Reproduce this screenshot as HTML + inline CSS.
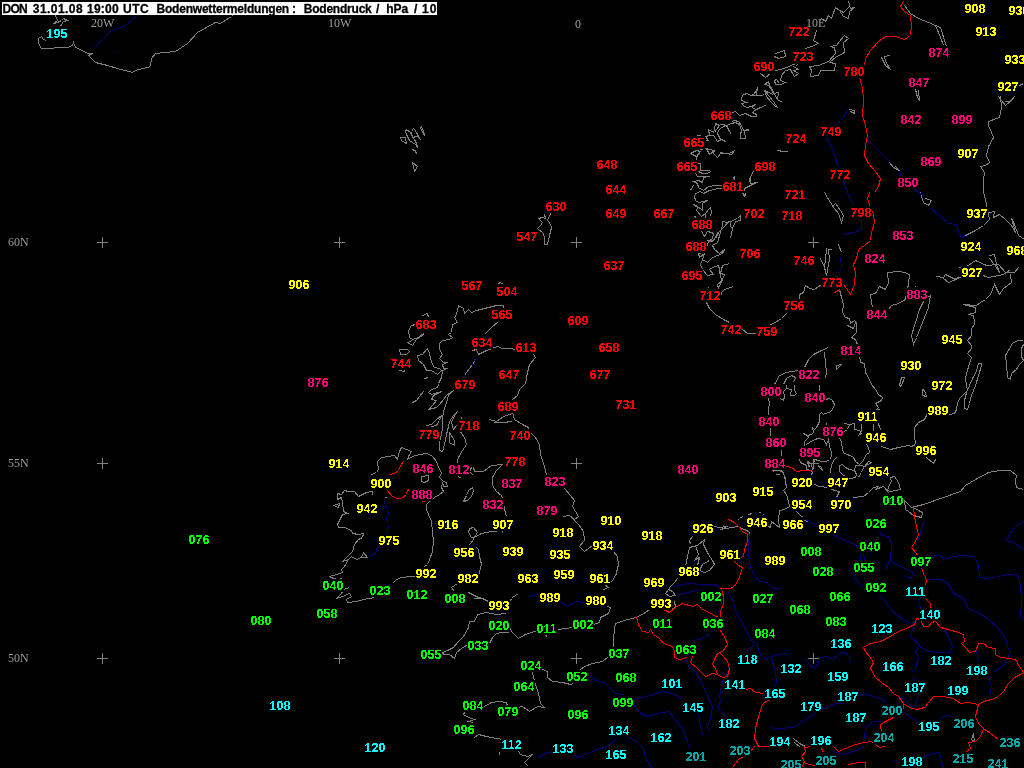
<!DOCTYPE html><html><head><meta charset="utf-8"><title>Bodenwettermeldungen</title><style>
html,body{margin:0;padding:0;background:#000;overflow:hidden}
#m{position:relative;width:1024px;height:768px;background:#000;overflow:hidden}
#m b{position:absolute;font:bold 12.5px/12px "Liberation Sans",Arial,sans-serif;letter-spacing:.05px;white-space:pre}
#n{position:absolute;left:0;top:0;width:1024px;height:768px;filter:url(#thr)}
#m i{position:absolute;font:normal 12px/12px "Liberation Serif","Times New Roman",serif;color:#9c9c9c;white-space:pre}
#l{position:absolute;left:0;top:0;width:1024px;height:768px;opacity:0.999}
#t{position:absolute;left:2px;top:2px;width:435px;height:13px;color:#000;font:bold 12px/13px "Liberation Sans",Arial,sans-serif;white-space:pre;overflow:hidden;opacity:0.999;-webkit-text-stroke:0.3px #000}
.r{color:#ff0000}.p{color:#ff0078}.y{color:#ffff00}.g{color:#00ff00}.c{color:#00ffff}.t{color:#00a8a8}
</style></head><body><div id="m">
<svg width="1024" height="768" viewBox="0 0 1024 768" style="position:absolute;left:0;top:0" fill="none" stroke-width="1" shape-rendering="crispEdges">
<path stroke="#808080" d="M55.5 15.5 L57.5 20.5 L53.5 23.5 L57.5 22.5 L61.5 20.5 L63.5 18.5 L67.5 20.5 L63.5 21.5 L61.5 24.5 L60.5 26.5 M41.5 36.5 L38.5 38.5 L38.5 43.5 L41.5 48.5 L46.5 48.5 L61.5 47.5 L67.5 47.5 L72.5 45.5 L73.5 42.5 L75.5 47.5 L86.5 52.5 L87.5 53.5 L92.5 53.5 L88.5 55.5 L95.5 62.5 L107.5 65.5 L117.5 68.5 L132.5 72.5 L135.5 70.5 L150.5 66.5 L151.5 58.5 L155.5 53.5 L175.5 51.5 L187.5 43.5 L197.5 32.5 L215.5 22.5 L220.5 23.5 L231.5 16.5 L232.5 15.5 M41.5 36.5 L43.5 39.5 L46.5 40.5 M400.5 137.5 L405.5 137.5 L406.5 143.5 L404.5 142.5 L401.5 140.5 L400.5 137.5 M406.5 129.5 L405.5 131.5 L406.5 134.5 L408.5 138.5 L409.5 140.5 L412.5 142.5 L415.5 144.5 L417.5 147.5 L416.5 143.5 L414.5 139.5 L412.5 137.5 L410.5 132.5 L406.5 129.5 M411.5 131.5 L413.5 128.5 L414.5 129.5 L416.5 132.5 L418.5 136.5 L420.5 139.5 L417.5 136.5 L415.5 136.5 L413.5 137.5 L411.5 134.5 L411.5 131.5 M420.5 127.5 L421.5 126.5 L423.5 131.5 L424.5 135.5 L422.5 132.5 L420.5 127.5 M412.5 149.5 L414.5 150.5 L416.5 153.5 L415.5 150.5 L412.5 149.5 M412.5 162.5 L417.5 166.5 L414.5 171.5 L412.5 162.5 M904.5 5.5 L910.5 13.5 L918.5 18.5 L928.5 22.5 L935.5 25.5 L940.5 37.5 L943.5 45.5 M935.5 25.5 L940.5 27.5 L946.5 46.5 M949.5 52.5 L950.5 53.5 M881.5 57.5 L885.5 65.5 L890.5 69.5 L885.5 61.5 L884.5 56.5 L890.5 55.5 M915.5 89.5 L917.5 97.5 L919.5 100.5 L918.5 90.5 M848.5 1.5 L850.5 8.5 L854.5 7.5 L849.5 11.5 L848.5 18.5 L843.5 16.5 L839.5 10.5 L843.5 12.5 L848.5 7.5 M839.5 10.5 L835.5 7.5 L831.5 18.5 L828.5 15.5 L825.5 21.5 L821.5 18.5 M816.5 30.5 L813.5 40.5 L818.5 43.5 L811.5 46.5 L805.5 48.5 M844.5 35.5 L848.5 38.5 L843.5 42.5 L844.5 52.5 L835.5 57.5 L829.5 62.5 L835.5 63.5 L834.5 70.5 L820.5 70.5 L818.5 75.5 L810.5 76.5 L811.5 70.5 L809.5 66.5 L818.5 65.5 L828.5 61.5 L835.5 53.5 L834.5 47.5 L830.5 46.5 L836.5 45.5 L839.5 41.5 L844.5 35.5 M775.5 53.5 L784.5 50.5 L785.5 56.5 L778.5 58.5 L774.5 56.5 M848.5 109.5 L854.5 110.5 L854.5 113.5 L850.5 111.5 M889.5 162.5 L893.5 167.5 L899.5 170.5 L895.5 166.5 M998.5 96.5 L1001.5 100.5 L1005.5 105.5 L1011.5 100.5 L1014.5 96.5 L1009.5 101.5 L1004.5 101.5 M1000.5 96.5 L1001.5 107.5 L999.5 117.5 L988.5 121.5 L988.5 125.5 L991.5 132.5 L993.5 137.5 L988.5 146.5 L986.5 155.5 L989.5 162.5 L985.5 165.5 L980.5 166.5 L984.5 172.5 L983.5 180.5 L983.5 192.5 M1019.5 85.5 L1023.5 83.5 M428.5 317.5 L427.5 313.5 L422.5 315.5 M415.5 324.5 L411.5 325.5 L408.5 330.5 L409.5 337.5 L412.5 339.5 L418.5 337.5 L423.5 333.5 L422.5 335.5 L416.5 339.5 L412.5 345.5 L407.5 342.5 L412.5 340.5 M399.5 349.5 L407.5 349.5 L409.5 351.5 L406.5 354.5 L400.5 354.5 L399.5 349.5 M417.5 355.5 L422.5 354.5 L427.5 348.5 L429.5 353.5 L431.5 362.5 L434.5 367.5 L439.5 368.5 L441.5 370.5 L437.5 374.5 L431.5 370.5 L426.5 370.5 L423.5 364.5 L418.5 360.5 L417.5 355.5 M399.5 370.5 L404.5 371.5 L404.5 369.5 M424.5 378.5 L428.5 377.5 M458.5 305.5 L456.5 314.5 L454.5 317.5 L457.5 322.5 L452.5 324.5 L451.5 332.5 L448.5 334.5 L452.5 337.5 L449.5 339.5 L442.5 340.5 L439.5 343.5 L439.5 349.5 L442.5 354.5 L439.5 358.5 L443.5 362.5 L447.5 362.5 L442.5 364.5 L443.5 368.5 L447.5 368.5 L442.5 370.5 L441.5 377.5 L438.5 383.5 M458.5 305.5 L463.5 308.5 L464.5 313.5 L468.5 309.5 L471.5 312.5 L476.5 310.5 L488.5 307.5 L496.5 305.5 L503.5 305.5 L503.5 307.5 M498.5 283.5 L500.5 282.5 L503.5 284.5 M498.5 321.5 L491.5 327.5 L484.5 334.5 M472.5 350.5 L476.5 349.5 L478.5 354.5 L486.5 350.5 L497.5 346.5 L502.5 348.5 L512.5 348.5 M544.5 214.5 L545.5 218.5 L542.5 217.5 L538.5 218.5 L542.5 222.5 L540.5 225.5 L537.5 228.5 L543.5 233.5 L544.5 238.5 L544.5 244.5 L547.5 244.5 L549.5 235.5 L551.5 227.5 L549.5 222.5 L547.5 220.5 L550.5 213.5 M708.5 240.5 L707.5 245.5 L702.5 252.5 L698.5 253.5 L699.5 257.5 L704.5 253.5 L702.5 259.5 L707.5 262.5 L712.5 257.5 L722.5 253.5 L724.5 249.5 L719.5 253.5 L714.5 249.5 L712.5 245.5 L717.5 242.5 L720.5 232.5 M702.5 259.5 L700.5 264.5 L702.5 269.5 L707.5 275.5 L713.5 274.5 L709.5 269.5 L712.5 267.5 L718.5 265.5 L719.5 269.5 L720.5 277.5 L722.5 280.5 L717.5 284.5 L718.5 288.5 L724.5 274.5 L720.5 273.5 L722.5 265.5 L729.5 263.5 M733.5 286.5 L724.5 289.5 L721.5 292.5 L720.5 297.5 M706.5 302.5 L709.5 308.5 L715.5 314.5 L723.5 319.5 L729.5 322.5 M742.5 329.5 L747.5 333.5 L755.5 333.5 M708.5 287.5 L709.5 288.5 M512.5 348.5 L515.5 350.5 M533.5 354.5 L535.5 357.5 L529.5 364.5 L527.5 372.5 L525.5 384.5 M743.5 192.5 L744.5 195.5 L745.5 193.5 M824.5 192.5 L830.5 202.5 L834.5 208.5 L838.5 213.5 L841.5 222.5 L843.5 215.5 L840.5 210.5 L835.5 203.5 L831.5 207.5 M838.5 244.5 L841.5 252.5 M826.5 248.5 L825.5 259.5 L824.5 267.5 L820.5 258.5 L824.5 267.5 L826.5 275.5 L829.5 259.5 L828.5 249.5 L831.5 249.5 M821.5 284.5 L814.5 289.5 L809.5 288.5 L805.5 285.5 L803.5 292.5 L799.5 294.5 L799.5 298.5 M786.5 313.5 L781.5 318.5 L773.5 323.5 L768.5 325.5 M839.5 289.5 L841.5 297.5 L843.5 304.5 L842.5 312.5 L845.5 317.5 L849.5 318.5 L850.5 323.5 L854.5 320.5 L856.5 322.5 L856.5 332.5 L851.5 337.5 L855.5 339.5 L858.5 347.5 M859.5 354.5 L860.5 362.5 L864.5 363.5 L865.5 372.5 L869.5 379.5 L871.5 384.5 M847.5 325.5 L853.5 328.5 L855.5 322.5 M887.5 272.5 L898.5 271.5 L904.5 272.5 L909.5 274.5 L908.5 284.5 L906.5 292.5 L905.5 299.5 L898.5 303.5 L891.5 305.5 L888.5 309.5 M887.5 272.5 L888.5 282.5 L885.5 289.5 L879.5 286.5 L875.5 293.5 L870.5 294.5 L871.5 302.5 L872.5 307.5 M930.5 295.5 L928.5 307.5 L924.5 317.5 L920.5 327.5 L916.5 337.5 L913.5 344.5 L911.5 335.5 L915.5 322.5 L919.5 309.5 L924.5 299.5 L930.5 295.5 M915.5 286.5 L916.5 287.5 M828.5 347.5 L821.5 350.5 L813.5 354.5 L808.5 359.5 L804.5 367.5 M824.5 352.5 L825.5 362.5 L826.5 372.5 L825.5 378.5 M836.5 365.5 L841.5 364.5 L836.5 369.5 L836.5 365.5 M774.5 384.5 L779.5 375.5 L786.5 372.5 L798.5 370.5 M783.5 384.5 L786.5 378.5 L791.5 375.5 L795.5 377.5 L793.5 382.5 M983.5 192.5 L985.5 199.5 L987.5 209.5 L989.5 219.5 L983.5 225.5 L975.5 230.5 L965.5 235.5 M989.5 212.5 L994.5 211.5 L993.5 217.5 L999.5 214.5 L1005.5 219.5 L1011.5 225.5 L1015.5 232.5 L1011.5 218.5 L1014.5 224.5 L1018.5 235.5 L1024.5 239.5 M989.5 255.5 L994.5 254.5 L996.5 264.5 L999.5 272.5 L994.5 264.5 L989.5 258.5 M936.5 276.5 L943.5 277.5 L945.5 274.5 L953.5 278.5 L960.5 277.5 L948.5 282.5 L943.5 278.5 M958.5 267.5 L965.5 267.5 L975.5 260.5 L986.5 265.5 L998.5 264.5 L1005.5 272.5 L1014.5 272.5 L1018.5 267.5 M980.5 274.5 L988.5 277.5 L1003.5 274.5 L1010.5 269.5 M1010.5 274.5 L1011.5 282.5 L1003.5 288.5 L999.5 294.5 L994.5 284.5 L990.5 294.5 L985.5 299.5 L980.5 302.5 L976.5 305.5 L963.5 304.5 L975.5 307.5 L975.5 312.5 L968.5 314.5 L973.5 315.5 L974.5 322.5 M920.5 192.5 L923.5 202.5 L928.5 205.5 L931.5 200.5 L925.5 198.5 M974.5 320.5 L974.5 324.5 L971.5 328.5 L971.5 335.5 L967.5 340.5 L971.5 345.5 L971.5 348.5 L967.5 353.5 L971.5 357.5 L969.5 363.5 L966.5 373.5 L965.5 378.5 L966.5 385.5 L967.5 390.5 L964.5 393.5 L959.5 398.5 L957.5 403.5 L956.5 409.5 L954.5 413.5 L949.5 414.5 M978.5 363.5 L981.5 363.5 L981.5 365.5 L978.5 375.5 L975.5 385.5 L971.5 395.5 L969.5 403.5 L967.5 409.5 L964.5 408.5 L964.5 400.5 L966.5 392.5 L969.5 385.5 L972.5 378.5 L976.5 371.5 L978.5 363.5 M1022.5 340.5 L1017.5 340.5 L1012.5 343.5 L1008.5 350.5 L1005.5 355.5 L1006.5 363.5 L1007.5 377.5 L1010.5 379.5 L1011.5 373.5 L1016.5 369.5 L1019.5 364.5 L1023.5 360.5 L1021.5 356.5 L1021.5 349.5 L1022.5 345.5 L1024.5 344.5 M901.5 377.5 L904.5 377.5 L901.5 385.5 L899.5 385.5 L901.5 377.5 M922.5 389.5 L924.5 390.5 L926.5 396.5 L922.5 395.5 L922.5 389.5 M926.5 416.5 L926.5 413.5 M775.5 70.5 L780.5 69.5 L786.5 67.5 L793.5 64.5 L794.5 64.5 M793.5 66.5 L798.5 69.5 L793.5 70.5 L798.5 73.5 L794.5 76.5 L792.5 73.5 L790.5 69.5 L785.5 70.5 L781.5 75.5 L780.5 80.5 L785.5 82.5 L780.5 84.5 L775.5 84.5 L774.5 80.5 L776.5 79.5 L779.5 83.5 M797.5 64.5 L795.5 66.5 M760.5 73.5 L765.5 77.5 L770.5 73.5 M764.5 84.5 L768.5 81.5 L769.5 85.5 L764.5 84.5 M769.5 86.5 L773.5 93.5 L778.5 92.5 L777.5 99.5 L774.5 94.5 L770.5 86.5 M777.5 99.5 L782.5 102.5 M764.5 90.5 L768.5 92.5 L773.5 94.5 M764.5 90.5 L766.5 96.5 L770.5 101.5 L774.5 105.5 L777.5 107.5 L773.5 101.5 L768.5 95.5 L764.5 90.5 M757.5 87.5 L756.5 90.5 L753.5 94.5 L750.5 95.5 L756.5 95.5 L757.5 87.5 M750.5 95.5 L747.5 93.5 L743.5 94.5 L741.5 97.5 L741.5 100.5 L746.5 102.5 L741.5 103.5 L743.5 105.5 L746.5 107.5 L751.5 106.5 L755.5 104.5 L752.5 107.5 L755.5 109.5 L760.5 107.5 L765.5 105.5 L758.5 108.5 L754.5 110.5 L752.5 112.5 L756.5 114.5 L756.5 116.5 L751.5 116.5 L745.5 113.5 L739.5 115.5 L735.5 111.5 L732.5 112.5 M756.5 95.5 L761.5 95.5 L764.5 94.5 M731.5 121.5 L734.5 120.5 L738.5 121.5 L741.5 125.5 L743.5 130.5 L748.5 129.5 L748.5 130.5 L744.5 130.5 L745.5 138.5 L740.5 138.5 L740.5 134.5 L741.5 130.5 L739.5 124.5 L735.5 122.5 L731.5 123.5 L726.5 125.5 L729.5 131.5 L731.5 134.5 M726.5 125.5 L720.5 124.5 L724.5 124.5 M715.5 123.5 L714.5 129.5 L713.5 132.5 L708.5 129.5 L709.5 135.5 L705.5 136.5 L708.5 140.5 L705.5 140.5 M709.5 135.5 L713.5 135.5 L717.5 141.5 L721.5 139.5 L725.5 141.5 L720.5 139.5 L717.5 133.5 L718.5 130.5 L721.5 127.5 L726.5 125.5 M715.5 123.5 L719.5 125.5 L716.5 129.5 L714.5 132.5 M696.5 135.5 L700.5 135.5 M690.5 153.5 L696.5 150.5 L700.5 151.5 L696.5 156.5 L690.5 153.5 M700.5 149.5 L706.5 148.5 L709.5 154.5 L714.5 150.5 L708.5 149.5 L706.5 148.5 M714.5 150.5 L713.5 153.5 L717.5 157.5 L720.5 153.5 L729.5 153.5 L734.5 150.5 L731.5 154.5 L720.5 152.5 M700.5 151.5 L696.5 157.5 L696.5 160.5 M777.5 150.5 L783.5 151.5 L787.5 151.5 M697.5 163.5 L700.5 163.5 L700.5 170.5 L709.5 170.5 L710.5 171.5 L707.5 173.5 L702.5 173.5 L698.5 171.5 L695.5 173.5 L697.5 176.5 L702.5 176.5 L709.5 176.5 L703.5 177.5 L702.5 182.5 L698.5 180.5 L693.5 181.5 L697.5 183.5 L698.5 187.5 L703.5 190.5 L708.5 186.5 L715.5 185.5 L722.5 185.5 M693.5 185.5 L690.5 190.5 M722.5 188.5 L718.5 188.5 L709.5 190.5 L703.5 193.5 L700.5 191.5 L695.5 193.5 L694.5 196.5 L695.5 200.5 L698.5 202.5 L703.5 201.5 L707.5 200.5 L702.5 203.5 L702.5 210.5 L696.5 205.5 L693.5 204.5 L697.5 207.5 L696.5 210.5 L701.5 216.5 L705.5 213.5 L708.5 209.5 L710.5 207.5 L711.5 211.5 L710.5 216.5 M705.5 213.5 L705.5 217.5 M694.5 216.5 L696.5 217.5 M734.5 176.5 L732.5 179.5 M734.5 176.5 L734.5 179.5 M753.5 171.5 L750.5 176.5 L750.5 183.5 L757.5 182.5 L752.5 184.5 L748.5 186.5 L744.5 188.5 L743.5 193.5 L742.5 193.5 L744.5 196.5 L745.5 195.5 M750.5 176.5 L749.5 180.5 L750.5 183.5 M740.5 215.5 L737.5 218.5 L730.5 221.5 L727.5 222.5 L722.5 221.5 L722.5 225.5 L720.5 231.5 L717.5 232.5 L715.5 237.5 L712.5 241.5 L708.5 240.5 L707.5 240.5 L710.5 241.5 L715.5 238.5 L719.5 231.5 L724.5 226.5 L728.5 221.5 M740.5 215.5 L740.5 220.5 L735.5 221.5 L732.5 228.5 L730.5 238.5 M730.5 221.5 L730.5 226.5 L732.5 228.5 M701.5 231.5 L704.5 236.5 L707.5 231.5 L711.5 232.5 L713.5 233.5 L712.5 238.5 L709.5 240.5 M372.5 494.5 L372.5 491.5 L366.5 492.5 L362.5 494.5 L358.5 496.5 L354.5 491.5 L348.5 491.5 L344.5 490.5 L341.5 494.5 L337.5 493.5 L337.5 499.5 L341.5 497.5 L342.5 502.5 L343.5 511.5 L347.5 513.5 L342.5 514.5 L339.5 520.5 L337.5 524.5 L338.5 527.5 L344.5 527.5 L351.5 530.5 L352.5 533.5 L358.5 534.5 L363.5 533.5 L362.5 537.5 L358.5 539.5 L354.5 544.5 L352.5 551.5 L348.5 555.5 L342.5 561.5 L348.5 559.5 L351.5 556.5 L356.5 559.5 L361.5 557.5 L367.5 557.5 L363.5 552.5 L361.5 557.5 M348.5 559.5 L344.5 566.5 L341.5 569.5 L342.5 572.5 L336.5 574.5 L329.5 576.5 M333.5 505.5 L339.5 503.5 L338.5 507.5 L333.5 505.5 M371.5 474.5 L376.5 472.5 L378.5 469.5 L377.5 461.5 L381.5 457.5 L388.5 456.5 L394.5 455.5 L397.5 459.5 L399.5 451.5 L401.5 447.5 L411.5 451.5 L408.5 456.5 L407.5 459.5 L412.5 456.5 L419.5 454.5 L427.5 453.5 L432.5 456.5 L436.5 461.5 L438.5 467.5 L441.5 472.5 L439.5 477.5 L443.5 481.5 L446.5 482.5 L447.5 486.5 L443.5 486.5 L442.5 482.5 L441.5 487.5 L443.5 491.5 L439.5 494.5 L434.5 497.5 L429.5 501.5 L426.5 504.5 L426.5 509.5 L428.5 514.5 L431.5 521.5 L432.5 531.5 L433.5 541.5 L432.5 551.5 L429.5 559.5 L427.5 564.5 L424.5 566.5 M421.5 476.5 L428.5 475.5 L428.5 480.5 L424.5 482.5 L421.5 481.5 L421.5 476.5 M423.5 391.5 L419.5 396.5 L416.5 400.5 L412.5 402.5 M438.5 384.5 L437.5 387.5 L431.5 389.5 L428.5 392.5 L431.5 394.5 L441.5 391.5 L433.5 395.5 L431.5 399.5 L436.5 400.5 L432.5 405.5 L428.5 409.5 L436.5 407.5 L439.5 404.5 L443.5 399.5 L446.5 395.5 L453.5 390.5 L448.5 395.5 L446.5 402.5 L443.5 411.5 L442.5 419.5 L442.5 427.5 L441.5 434.5 L439.5 441.5 L439.5 450.5 L442.5 451.5 L444.5 444.5 L446.5 434.5 L448.5 426.5 L449.5 421.5 L453.5 415.5 L457.5 411.5 L453.5 417.5 L451.5 422.5 L453.5 429.5 L456.5 425.5 M426.5 425.5 L431.5 424.5 L436.5 419.5 L441.5 415.5 L439.5 420.5 L436.5 425.5 L431.5 426.5 M449.5 432.5 L454.5 440.5 L454.5 445.5 L449.5 442.5 L449.5 432.5 M461.5 416.5 L461.5 419.5 M459.5 430.5 L464.5 437.5 L466.5 444.5 L462.5 450.5 L458.5 457.5 L456.5 464.5 M458.5 476.5 L461.5 478.5 M473.5 467.5 L474.5 471.5 L483.5 471.5 L491.5 465.5 L502.5 464.5 M471.5 467.5 L469.5 471.5 L473.5 475.5 M489.5 419.5 L496.5 421.5 L503.5 416.5 L512.5 413.5 M493.5 422.5 L502.5 422.5 L512.5 421.5 M502.5 464.5 L496.5 470.5 L492.5 477.5 L492.5 485.5 L496.5 491.5 L501.5 495.5 L503.5 501.5 L504.5 509.5 L506.5 516.5 M472.5 487.5 L473.5 490.5 L471.5 496.5 L467.5 500.5 L463.5 501.5 L466.5 495.5 L468.5 490.5 L472.5 487.5 M469.5 528.5 L473.5 527.5 L477.5 532.5 L474.5 537.5 L471.5 537.5 L468.5 532.5 L469.5 528.5 M474.5 537.5 L481.5 533.5 L491.5 531.5 L502.5 530.5 L502.5 532.5 M474.5 537.5 L471.5 542.5 L468.5 545.5 M476.5 547.5 L478.5 549.5 L479.5 556.5 L481.5 564.5 L479.5 571.5 L478.5 576.5 M384.5 497.5 L386.5 497.5 M524.5 384.5 L519.5 389.5 L517.5 395.5 L512.5 399.5 M512.5 412.5 L514.5 419.5 L522.5 424.5 L528.5 427.5 L529.5 431.5 L535.5 437.5 L539.5 444.5 L540.5 454.5 L544.5 466.5 L546.5 475.5 M564.5 488.5 L570.5 495.5 L574.5 500.5 L572.5 506.5 L575.5 511.5 L578.5 516.5 L574.5 519.5 L569.5 515.5 L563.5 516.5 L569.5 515.5 L573.5 519.5 L578.5 524.5 L583.5 531.5 L584.5 540.5 L579.5 546.5 L584.5 551.5 L592.5 545.5 M613.5 551.5 L617.5 556.5 L618.5 564.5 L615.5 576.5 M714.5 526.5 L719.5 527.5 L727.5 526.5 L720.5 529.5 L732.5 527.5 L737.5 526.5 L744.5 529.5 L748.5 531.5 L750.5 534.5 M737.5 520.5 L738.5 519.5 M740.5 517.5 L743.5 516.5 M748.5 514.5 L752.5 513.5 M758.5 512.5 L760.5 512.5 M763.5 514.5 L764.5 515.5 M704.5 539.5 L697.5 545.5 L689.5 547.5 L687.5 556.5 L685.5 566.5 M692.5 536.5 L689.5 540.5 L690.5 544.5 M704.5 539.5 L703.5 544.5 L708.5 554.5 L712.5 560.5 L714.5 564.5 L709.5 570.5 L704.5 572.5 L699.5 570.5 L702.5 564.5 L709.5 560.5 M695.5 545.5 L698.5 554.5 L695.5 559.5 L699.5 557.5 L697.5 565.5 M773.5 470.5 L779.5 470.5 L783.5 472.5 L785.5 481.5 L786.5 487.5 L783.5 490.5 L786.5 494.5 L788.5 501.5 L789.5 506.5 L784.5 509.5 L779.5 510.5 L778.5 519.5 L779.5 527.5 L775.5 524.5 L771.5 521.5 L770.5 527.5 L768.5 526.5 M814.5 484.5 L819.5 486.5 L828.5 487.5 L834.5 490.5 L839.5 491.5 L836.5 497.5 M853.5 497.5 L863.5 496.5 L868.5 492.5 L873.5 487.5 L878.5 486.5 L875.5 489.5 L883.5 486.5 L886.5 489.5 L888.5 492.5 L885.5 489.5 M890.5 477.5 L894.5 476.5 L898.5 482.5 L900.5 489.5 L895.5 490.5 L890.5 491.5 L887.5 490.5 L889.5 484.5 L891.5 481.5 L890.5 477.5 M881.5 446.5 L890.5 449.5 L898.5 447.5 L908.5 445.5 L911.5 446.5 L915.5 444.5 L914.5 434.5 L914.5 427.5 L918.5 422.5 L924.5 419.5 L926.5 415.5 M900.5 384.5 L900.5 386.5 M926.5 457.5 L933.5 463.5 L935.5 459.5 M904.5 500.5 L911.5 507.5 L923.5 504.5 L943.5 497.5 L960.5 491.5 L965.5 485.5 L975.5 479.5 L988.5 472.5 L1000.5 470.5 L1010.5 470.5 L1016.5 475.5 L1015.5 481.5 L1016.5 487.5 L1023.5 489.5 M904.5 500.5 L905.5 509.5 L908.5 511.5 L913.5 515.5 L921.5 517.5 L922.5 512.5 L918.5 510.5 L913.5 507.5 M796.5 511.5 L800.5 515.5 L803.5 517.5 M800.5 519.5 L808.5 521.5 M329.5 576.5 L333.5 578.5 L338.5 579.5 L342.5 578.5 M349.5 587.5 L343.5 589.5 L341.5 593.5 L336.5 598.5 L342.5 596.5 L349.5 593.5 L351.5 596.5 L346.5 599.5 L347.5 602.5 L356.5 601.5 L363.5 599.5 L374.5 597.5 M392.5 583.5 L396.5 579.5 L401.5 577.5 L411.5 576.5 L416.5 576.5 M457.5 583.5 L451.5 587.5 L454.5 591.5 M468.5 592.5 L476.5 596.5 L479.5 597.5 L474.5 598.5 L482.5 598.5 L488.5 601.5 M507.5 602.5 L512.5 598.5 M506.5 613.5 L496.5 614.5 L486.5 612.5 L477.5 614.5 L474.5 621.5 L469.5 621.5 L468.5 627.5 L463.5 636.5 L458.5 641.5 L453.5 647.5 L447.5 650.5 L442.5 652.5 L443.5 654.5 L449.5 654.5 L454.5 658.5 L456.5 652.5 L461.5 648.5 L464.5 646.5 L468.5 644.5 M489.5 643.5 L492.5 637.5 L496.5 633.5 L502.5 632.5 L508.5 632.5 M509.5 627.5 L512.5 632.5 M484.5 706.5 L491.5 702.5 L498.5 701.5 L506.5 702.5 L507.5 706.5 M464.5 712.5 L463.5 714.5 L468.5 717.5 L474.5 719.5 L468.5 721.5 L473.5 722.5 M474.5 737.5 L478.5 734.5 L486.5 736.5 L496.5 738.5 L502.5 739.5 M499.5 751.5 L499.5 754.5 M512.5 597.5 L518.5 593.5 M512.5 632.5 L518.5 638.5 L525.5 634.5 L537.5 630.5 M558.5 629.5 L572.5 627.5 M593.5 624.5 L599.5 622.5 L600.5 617.5 L608.5 613.5 L610.5 607.5 L607.5 606.5 M603.5 589.5 L608.5 587.5 L604.5 584.5 L612.5 581.5 L614.5 576.5 M545.5 635.5 L547.5 636.5 M677.5 578.5 L674.5 582.5 L670.5 586.5 L668.5 589.5 L665.5 593.5 L669.5 596.5 L675.5 595.5 L672.5 591.5 L668.5 589.5 M674.5 601.5 L675.5 607.5 L672.5 608.5 M649.5 609.5 L642.5 614.5 L635.5 617.5 L624.5 620.5 L615.5 623.5 L614.5 629.5 L613.5 638.5 L613.5 647.5 M608.5 656.5 L602.5 661.5 L592.5 663.5 L584.5 666.5 L580.5 669.5 M542.5 669.5 L547.5 671.5 L547.5 677.5 L552.5 681.5 L562.5 682.5 L570.5 684.5 L573.5 683.5 M532.5 672.5 L534.5 681.5 L538.5 693.5 L540.5 703.5 L544.5 707.5 L537.5 706.5 L529.5 711.5 L522.5 706.5 L517.5 707.5 M517.5 676.5 L517.5 676.5 M518.5 751.5 L520.5 754.5 L527.5 756.5 L532.5 754.5 L528.5 758.5 L524.5 762.5 L528.5 766.5 M793.5 738.5 L799.5 743.5 L805.5 746.5 M794.5 742.5 L800.5 747.5 M973.5 733.5 L971.5 739.5 L974.5 741.5 L973.5 733.5 M819.5 384.5 L819.5 390.5 M786.5 384.5 L786.5 388.5 L783.5 391.5 L784.5 396.5 L783.5 400.5 L780.5 398.5 M786.5 388.5 L791.5 389.5 L790.5 395.5 L794.5 395.5 L796.5 393.5 L794.5 390.5 L794.5 384.5 M825.5 399.5 L829.5 398.5 L832.5 400.5 L834.5 404.5 L832.5 409.5 L829.5 412.5 L824.5 413.5 L823.5 414.5 L821.5 412.5 L819.5 414.5 L819.5 421.5 L816.5 427.5 L814.5 429.5 L812.5 427.5 L813.5 432.5 L811.5 434.5 L807.5 435.5 L803.5 433.5 L807.5 435.5 L808.5 437.5 L804.5 441.5 L804.5 445.5 M806.5 444.5 L809.5 442.5 L814.5 439.5 L818.5 438.5 L823.5 439.5 L826.5 444.5 L828.5 439.5 L829.5 446.5 L831.5 452.5 L831.5 456.5 L829.5 459.5 L826.5 461.5 L821.5 461.5 L818.5 460.5 L814.5 459.5 L813.5 464.5 L812.5 469.5 L811.5 464.5 L809.5 462.5 L807.5 461.5 L808.5 466.5 L810.5 465.5 M799.5 459.5 L800.5 462.5 L804.5 464.5 L806.5 465.5 L806.5 469.5 L810.5 470.5 L812.5 471.5 L811.5 475.5 M818.5 465.5 L821.5 467.5 L822.5 470.5 L819.5 467.5 L818.5 465.5 M836.5 457.5 L833.5 460.5 L831.5 465.5 L830.5 470.5 L830.5 472.5 M844.5 423.5 L849.5 424.5 L854.5 423.5 L854.5 429.5 L859.5 430.5 L861.5 433.5 L858.5 435.5 L861.5 431.5 L861.5 423.5 M849.5 424.5 L847.5 429.5 L844.5 431.5 M826.5 422.5 L826.5 424.5 M839.5 437.5 L841.5 442.5 L842.5 449.5 L843.5 452.5 L846.5 454.5 L850.5 455.5 L853.5 457.5 L855.5 461.5 L859.5 464.5 L863.5 460.5 L864.5 457.5 L866.5 454.5 L869.5 452.5 L868.5 447.5 L866.5 444.5 M873.5 423.5 L873.5 430.5 M878.5 423.5 L879.5 427.5 L881.5 430.5 M871.5 384.5 L875.5 389.5 L878.5 394.5 L882.5 397.5 L881.5 400.5 L875.5 403.5 L878.5 407.5 L876.5 409.5 L879.5 409.5 M839.5 465.5 L842.5 464.5 L845.5 467.5 L849.5 469.5 L854.5 470.5 L856.5 474.5 L855.5 477.5 L850.5 478.5 L843.5 475.5 L839.5 471.5 L839.5 467.5 L839.5 465.5 M855.5 465.5 L861.5 465.5 L864.5 466.5 L868.5 461.5 L871.5 462.5 L866.5 465.5 L863.5 467.5 L861.5 472.5 L858.5 477.5 M854.5 470.5 L855.5 465.5 M768.5 398.5 L769.5 403.5 L768.5 409.5 L768.5 414.5 M770.5 427.5 L770.5 435.5 M781.5 449.5 L781.5 455.5 M771.5 469.5 L773.5 471.5 L774.5 469.5 M775.5 474.5 L779.5 474.5 M781.5 469.5 L783.5 474.5 L786.5 479.5"/>
<path stroke="#000080" d="M137.5 15.5 L125.5 25.5 L110.5 31.5 L100.5 41.5 L93.5 48.5 M117.5 50.5 L119.5 52.5 M848.5 109.5 L843.5 117.5 L835.5 125.5 M826.5 137.5 L831.5 146.5 L835.5 157.5 L838.5 167.5 M843.5 180.5 L845.5 187.5 L848.5 192.5 M863.5 137.5 L870.5 142.5 L878.5 150.5 L885.5 157.5 L890.5 162.5 M900.5 173.5 L901.5 178.5 L913.5 188.5 L918.5 192.5 M475.5 358.5 L472.5 364.5 L466.5 372.5 L462.5 378.5 M847.5 192.5 L850.5 199.5 L854.5 205.5 M861.5 217.5 L861.5 229.5 L853.5 232.5 L844.5 234.5 M840.5 257.5 L841.5 267.5 L838.5 274.5 M918.5 192.5 L924.5 195.5 M930.5 207.5 L938.5 214.5 L948.5 223.5 L956.5 224.5 L959.5 234.5 L961.5 237.5 L965.5 235.5 M384.5 501.5 L383.5 506.5 L386.5 506.5 L387.5 511.5 L389.5 514.5 L386.5 517.5 L387.5 522.5 M388.5 526.5 L386.5 534.5 L384.5 539.5 M378.5 546.5 L374.5 554.5 L369.5 556.5 M749.5 534.5 L748.5 544.5 L748.5 556.5 L750.5 566.5 L754.5 576.5 M924.5 522.5 L921.5 526.5 L920.5 534.5 L917.5 540.5 M805.5 519.5 L809.5 521.5 L818.5 527.5 L828.5 531.5 L835.5 536.5 L848.5 541.5 L858.5 546.5 L863.5 552.5 L864.5 559.5 L868.5 564.5 M879.5 531.5 L881.5 535.5 L888.5 536.5 L891.5 544.5 L890.5 559.5 L885.5 569.5 M891.5 562.5 L900.5 566.5 L910.5 570.5 L915.5 576.5 M1024.5 520.5 L1015.5 526.5 L1009.5 534.5 L1006.5 540.5 L1013.5 542.5 L1024.5 549.5 M928.5 556.5 L940.5 555.5 L943.5 559.5 L953.5 556.5 L963.5 555.5 L973.5 556.5 L978.5 564.5 L979.5 576.5 M998.5 576.5 L1008.5 574.5 L1018.5 575.5 M860.5 554.5 L861.5 564.5 M853.5 576.5 L855.5 574.5 M529.5 596.5 L537.5 594.5 M560.5 601.5 L567.5 606.5 L575.5 601.5 L585.5 602.5 M673.5 586.5 L687.5 583.5 L702.5 584.5 L714.5 584.5 L720.5 587.5 M677.5 594.5 L684.5 593.5 L692.5 591.5 L699.5 589.5 M727.5 591.5 L733.5 601.5 L735.5 611.5 L742.5 622.5 L747.5 633.5 L752.5 641.5 L757.5 644.5 L758.5 651.5 L764.5 658.5 L768.5 659.5 M755.5 644.5 L749.5 648.5 L745.5 651.5 M719.5 609.5 L717.5 614.5 M710.5 632.5 L704.5 637.5 L695.5 640.5 M685.5 657.5 L688.5 666.5 L695.5 671.5 L702.5 683.5 L707.5 696.5 L712.5 706.5 L710.5 718.5 L707.5 726.5 L709.5 731.5 M729.5 668.5 L722.5 681.5 L719.5 696.5 L720.5 701.5 L717.5 707.5 L724.5 714.5 L727.5 721.5 M590.5 676.5 L597.5 681.5 L604.5 682.5 L610.5 688.5 L615.5 693.5 L624.5 694.5 M633.5 699.5 L647.5 696.5 L662.5 691.5 L672.5 693.5 L682.5 698.5 M633.5 704.5 L639.5 712.5 L647.5 716.5 L657.5 713.5 L668.5 711.5 L674.5 718.5 L682.5 728.5 L687.5 741.5 L689.5 748.5 M698.5 713.5 L700.5 726.5 L703.5 736.5 M627.5 736.5 L637.5 742.5 L643.5 748.5 L645.5 758.5 L652.5 768.5 M617.5 737.5 L607.5 746.5 L597.5 749.5 L587.5 753.5 L578.5 757.5 L573.5 754.5 M537.5 758.5 L544.5 753.5 L552.5 751.5 M755.5 576.5 L759.5 581.5 L768.5 582.5 M768.5 583.5 L773.5 588.5 L781.5 588.5 M853.5 576.5 L859.5 583.5 L868.5 589.5 M878.5 594.5 L885.5 601.5 L893.5 612.5 L903.5 619.5 L911.5 624.5 M905.5 576.5 L913.5 578.5 M918.5 599.5 L920.5 606.5 L920.5 613.5 M928.5 579.5 L940.5 579.5 L948.5 583.5 L953.5 593.5 L963.5 598.5 L968.5 608.5 L978.5 612.5 L988.5 619.5 L998.5 628.5 L1005.5 638.5 L1009.5 651.5 L1006.5 662.5 L1000.5 667.5 L993.5 672.5 M978.5 576.5 L985.5 578.5 L995.5 577.5 M1018.5 576.5 L1020.5 586.5 L1021.5 601.5 L1020.5 616.5 L1024.5 619.5 M914.5 622.5 L910.5 636.5 L919.5 644.5 L915.5 651.5 L918.5 658.5 L915.5 668.5 L911.5 672.5 M919.5 646.5 L928.5 651.5 L938.5 652.5 L950.5 652.5 L952.5 646.5 L948.5 637.5 L944.5 629.5 M913.5 677.5 L915.5 683.5 L918.5 693.5 L916.5 701.5 L914.5 706.5 M768.5 657.5 L778.5 654.5 L786.5 653.5 L791.5 658.5 M805.5 658.5 L809.5 664.5 L814.5 668.5 L818.5 663.5 L819.5 657.5 L826.5 656.5 L833.5 659.5 L838.5 653.5 L844.5 652.5 L849.5 656.5 L850.5 662.5 M771.5 658.5 L775.5 671.5 L776.5 681.5 L775.5 687.5 M770.5 726.5 L774.5 729.5 L778.5 727.5 M778.5 728.5 L793.5 727.5 L805.5 719.5 L816.5 712.5 L828.5 706.5 L836.5 703.5 L843.5 703.5 M859.5 696.5 L863.5 693.5 L873.5 696.5 L883.5 699.5 L885.5 703.5 M898.5 696.5 L904.5 699.5 L908.5 703.5 L913.5 707.5 M904.5 712.5 L911.5 718.5 L918.5 721.5 M940.5 718.5 L945.5 715.5 L953.5 716.5 M880.5 721.5 L873.5 721.5 L866.5 726.5 L864.5 733.5 L865.5 743.5 M833.5 751.5 L843.5 754.5 L853.5 751.5 L864.5 746.5 M979.5 724.5 L985.5 729.5 M976.5 651.5 L978.5 661.5 M988.5 676.5 L991.5 686.5 L989.5 696.5 M893.5 760.5 L898.5 762.5 M924.5 756.5 L933.5 753.5 L939.5 752.5 L943.5 768.5"/>
<path stroke="#808080" d="M474.5 361.5 L472.5 364.5 L466.5 372.5 L464.5 375.5"/>
<path stroke="#ff0000" d="M903.5 1.5 L900.5 6.5 L904.5 11.5 L910.5 15.5 L911.5 25.5 L910.5 35.5 L904.5 39.5 L895.5 36.5 L885.5 36.5 L878.5 41.5 L870.5 50.5 L865.5 58.5 L864.5 65.5 M859.5 77.5 L862.5 87.5 L863.5 100.5 L862.5 115.5 L865.5 125.5 L867.5 135.5 L865.5 145.5 L864.5 155.5 L868.5 163.5 L875.5 171.5 L880.5 178.5 L878.5 186.5 L874.5 192.5 M869.5 192.5 L867.5 198.5 L869.5 204.5 L871.5 209.5 L873.5 214.5 L874.5 222.5 L871.5 232.5 L870.5 240.5 L864.5 245.5 L858.5 249.5 L856.5 258.5 L853.5 264.5 L855.5 272.5 L854.5 284.5 L850.5 294.5 L846.5 288.5 L843.5 284.5 M834.5 292.5 L840.5 289.5 M403.5 461.5 L400.5 465.5 L398.5 470.5 L394.5 473.5 L389.5 474.5 M387.5 490.5 L391.5 495.5 L396.5 498.5 L401.5 498.5 L406.5 494.5 L407.5 490.5 L409.5 489.5 M421.5 501.5 L424.5 501.5 M728.5 519.5 L734.5 522.5 L739.5 527.5 L742.5 531.5 L747.5 534.5 L747.5 541.5 L744.5 549.5 L743.5 556.5 L740.5 557.5 M734.5 561.5 L738.5 565.5 L742.5 567.5 L739.5 576.5 M913.5 507.5 L914.5 516.5 L916.5 526.5 L918.5 534.5 L915.5 541.5 L911.5 547.5 L915.5 552.5 L918.5 556.5 M921.5 567.5 L924.5 576.5 M636.5 617.5 L638.5 624.5 L642.5 631.5 L648.5 632.5 L650.5 629.5 L653.5 634.5 L659.5 638.5 L663.5 643.5 L672.5 646.5 L674.5 651.5 L674.5 657.5 L679.5 659.5 L684.5 658.5 L687.5 656.5 M663.5 609.5 L669.5 612.5 L675.5 607.5 L682.5 603.5 L692.5 606.5 L697.5 604.5 L702.5 609.5 L709.5 612.5 L715.5 616.5 L720.5 617.5 L720.5 611.5 L723.5 603.5 L723.5 597.5 L722.5 591.5 L720.5 588.5 L729.5 588.5 L734.5 586.5 L738.5 579.5 L739.5 576.5 M719.5 617.5 L719.5 629.5 L724.5 636.5 L727.5 644.5 L722.5 651.5 L717.5 653.5 L714.5 659.5 L712.5 664.5 L715.5 668.5 L717.5 674.5 L722.5 677.5 L727.5 676.5 L729.5 668.5 L727.5 661.5 L723.5 656.5 L720.5 653.5 M692.5 656.5 L690.5 662.5 L697.5 668.5 L705.5 676.5 L712.5 673.5 L717.5 674.5 M745.5 689.5 L750.5 688.5 L755.5 692.5 L763.5 693.5 M768.5 699.5 L762.5 704.5 L758.5 716.5 L755.5 728.5 L754.5 738.5 L758.5 746.5 L768.5 746.5 M754.5 746.5 L749.5 752.5 L738.5 759.5 L732.5 767.5 M863.5 647.5 L870.5 643.5 L880.5 641.5 L888.5 637.5 L898.5 631.5 L908.5 627.5 L914.5 624.5 L916.5 618.5 L920.5 619.5 L923.5 626.5 L928.5 626.5 L931.5 622.5 L935.5 621.5 L940.5 627.5 L948.5 629.5 L958.5 632.5 L963.5 634.5 L964.5 641.5 L961.5 643.5 L966.5 648.5 L969.5 652.5 L975.5 651.5 L978.5 643.5 L983.5 643.5 L988.5 647.5 L995.5 648.5 L995.5 654.5 L1000.5 657.5 L1008.5 658.5 L1015.5 659.5 L1019.5 666.5 L1023.5 672.5 L1020.5 674.5 L1014.5 677.5 L1008.5 683.5 L1003.5 691.5 L998.5 696.5 L991.5 699.5 L983.5 701.5 L978.5 704.5 L968.5 702.5 L960.5 703.5 L953.5 698.5 L943.5 696.5 L933.5 696.5 L929.5 701.5 L924.5 707.5 L916.5 709.5 L909.5 707.5 L903.5 703.5 L898.5 696.5 L893.5 693.5 L888.5 687.5 L881.5 682.5 L875.5 677.5 L870.5 668.5 L873.5 662.5 L869.5 656.5 L865.5 651.5 L863.5 647.5 M925.5 576.5 L926.5 581.5 L924.5 587.5 L925.5 598.5 L930.5 603.5 L931.5 611.5 L928.5 619.5 M903.5 703.5 L903.5 708.5 M893.5 717.5 L885.5 721.5 L880.5 724.5 L881.5 732.5 M978.5 704.5 L975.5 716.5 L978.5 723.5 L983.5 728.5 L980.5 736.5 L975.5 741.5 L968.5 742.5 L970.5 748.5 L966.5 751.5 L968.5 756.5 L965.5 764.5 M983.5 728.5 L990.5 733.5 L998.5 739.5 M885.5 746.5 L879.5 747.5 L871.5 741.5 L864.5 742.5 L855.5 744.5 L845.5 748.5 L838.5 751.5 L833.5 746.5 M821.5 748.5 L823.5 752.5 M801.5 768.5 L804.5 761.5 L801.5 756.5 L805.5 751.5 L804.5 747.5 L811.5 746.5 M803.5 762.5 L809.5 764.5 L818.5 766.5 M848.5 764.5 L858.5 762.5 L865.5 762.5 L865.5 768.5 M768.5 699.5 L769.5 701.5 M786.5 466.5 L791.5 467.5 L796.5 471.5 L804.5 470.5 L810.5 470.5 L813.5 471.5"/>
<path stroke="#808080" d="M97 242.5h11M102.5 237v11 M334 242.5h11M339.5 237v11 M571 242.5h11M576.5 237v11 M808 242.5h11M813.5 237v11 M97 463.5h11M102.5 458v11 M334 463.5h11M339.5 458v11 M571 463.5h11M576.5 458v11 M808 463.5h11M813.5 458v11 M97 658.5h11M102.5 653v11 M334 658.5h11M339.5 653v11 M571 658.5h11M576.5 653v11 M808 658.5h11M813.5 653v11"/>
<path fill="#000" stroke="none" d="M46 27h22v13h-22z M964 2h22v13h-22z M1008 4h22v13h-22z M975 25h22v13h-22z M788 25h22v13h-22z M928 46h22v13h-22z M792 50h22v13h-22z M1004 53h22v13h-22z M753 60h22v13h-22z M843 65h22v13h-22z M908 76h22v13h-22z M997 80h22v13h-22z M710 109h22v13h-22z M900 113h22v13h-22z M951 113h22v13h-22z M820 125h22v13h-22z M785 132h22v13h-22z M683 136h22v13h-22z M957 147h22v13h-22z M920 155h22v13h-22z M596 158h22v13h-22z M676 160h22v13h-22z M754 160h22v13h-22z M829 168h22v13h-22z M897 176h22v13h-22z M722 180h22v13h-22z M605 183h22v13h-22z M784 188h22v13h-22z M545 200h22v13h-22z M605 207h22v13h-22z M653 207h22v13h-22z M743 207h22v13h-22z M781 209h22v13h-22z M850 206h22v13h-22z M966 207h22v13h-22z M691 218h22v13h-22z M892 229h22v13h-22z M516 230h22v13h-22z M685 240h22v13h-22z M960 240h22v13h-22z M1006 244h22v13h-22z M739 247h22v13h-22z M793 254h22v13h-22z M864 252h22v13h-22z M603 259h22v13h-22z M961 266h22v13h-22z M681 269h22v13h-22z M821 276h22v13h-22z M288 278h22v13h-22z M461 279h22v13h-22z M496 285h22v13h-22z M699 289h22v13h-22z M906 288h22v13h-22z M783 299h22v13h-22z M491 308h22v13h-22z M866 308h22v13h-22z M567 314h22v13h-22z M415 318h22v13h-22z M720 323h22v13h-22z M756 325h22v13h-22z M941 333h22v13h-22z M471 336h22v13h-22z M515 341h22v13h-22z M598 341h22v13h-22z M840 344h22v13h-22z M390 357h22v13h-22z M900 359h22v13h-22z M498 368h22v13h-22z M589 368h22v13h-22z M798 368h22v13h-22z M307 376h22v13h-22z M454 378h22v13h-22z M931 379h22v13h-22z M760 385h22v13h-22z M804 391h22v13h-22z M615 398h22v13h-22z M497 400h22v13h-22z M927 404h22v13h-22z M857 410h22v13h-22z M758 415h22v13h-22z M458 419h22v13h-22z M822 425h22v13h-22z M418 428h22v13h-22z M509 429h22v13h-22z M865 431h22v13h-22z M765 436h22v13h-22z M915 444h22v13h-22z M799 446h22v13h-22z M504 455h22v13h-22z M764 457h22v13h-22z M328 457h22v13h-22z M412 462h22v13h-22z M448 463h22v13h-22z M677 463h22v13h-22z M868 465h22v13h-22z M544 475h22v13h-22z M370 477h22v13h-22z M501 477h22v13h-22z M791 476h22v13h-22z M827 476h22v13h-22z M752 485h22v13h-22z M411 488h22v13h-22z M715 491h22v13h-22z M882 494h22v13h-22z M482 498h22v13h-22z M791 498h22v13h-22z M830 498h22v13h-22z M356 502h22v13h-22z M536 504h22v13h-22z M600 514h22v13h-22z M746 516h22v13h-22z M865 517h22v13h-22z M437 518h22v13h-22z M492 518h22v13h-22z M782 518h22v13h-22z M692 522h22v13h-22z M818 522h22v13h-22z M552 526h22v13h-22z M641 529h22v13h-22z M188 533h22v13h-22z M378 534h22v13h-22z M592 539h22v13h-22z M859 540h22v13h-22z M502 545h22v13h-22z M800 545h22v13h-22z M453 546h22v13h-22z M719 548h22v13h-22z M549 548h22v13h-22z M764 554h22v13h-22z M910 555h22v13h-22z M853 561h22v13h-22z M678 565h22v13h-22z M812 565h22v13h-22z M415 567h22v13h-22z M553 568h22v13h-22z M517 572h22v13h-22z M457 572h22v13h-22z M589 572h22v13h-22z M643 576h22v13h-22z M322 579h22v13h-22z M865 581h22v13h-22z M369 584h22v13h-22z M905 585h22v13h-22z M406 588h22v13h-22z M700 590h22v13h-22z M829 590h22v13h-22z M539 591h22v13h-22z M444 592h22v13h-22z M752 592h22v13h-22z M585 594h22v13h-22z M650 597h22v13h-22z M488 599h22v13h-22z M789 603h22v13h-22z M316 607h22v13h-22z M919 608h22v13h-22z M250 614h22v13h-22z M825 615h22v13h-22z M652 617h22v13h-22z M702 617h22v13h-22z M572 618h22v13h-22z M488 619h22v13h-22z M536 622h22v13h-22z M871 622h22v13h-22z M754 627h22v13h-22z M830 637h22v13h-22z M467 639h22v13h-22z M675 643h22v13h-22z M608 647h22v13h-22z M420 648h22v13h-22z M737 653h22v13h-22z M930 654h22v13h-22z M520 659h22v13h-22z M882 660h22v13h-22z M780 662h22v13h-22z M966 664h22v13h-22z M566 670h22v13h-22z M827 670h22v13h-22z M615 671h22v13h-22z M661 677h22v13h-22z M724 678h22v13h-22z M513 680h22v13h-22z M904 681h22v13h-22z M947 684h22v13h-22z M764 687h22v13h-22z M837 690h22v13h-22z M612 696h22v13h-22z M269 699h22v13h-22z M462 699h22v13h-22z M800 700h22v13h-22z M682 701h22v13h-22z M881 704h22v13h-22z M497 705h22v13h-22z M567 708h22v13h-22z M845 711h22v13h-22z M718 717h22v13h-22z M953 717h22v13h-22z M918 720h22v13h-22z M453 723h22v13h-22z M608 724h22v13h-22z M650 731h22v13h-22z M873 731h22v13h-22z M810 734h22v13h-22z M769 735h22v13h-22z M999 736h22v13h-22z M501 738h22v13h-22z M364 741h22v13h-22z M552 742h22v13h-22z M729 744h22v13h-22z M605 748h22v13h-22z M685 750h22v13h-22z M952 752h22v13h-22z M815 754h22v13h-22z M901 755h22v13h-22z M987 757h22v13h-22z M780 758h22v13h-22z"/>
<rect x="2" y="2" width="435" height="13" fill="#fff" stroke="none"/>
<filter id="thr" x="0" y="0" width="100%" height="100%" color-interpolation-filters="sRGB"><feComponentTransfer><feFuncA type="discrete" tableValues="0 1"/></feComponentTransfer></filter>
</svg>
<div id="t"><span style="position:absolute;left:0.5px;top:1px;letter-spacing:-0.75px">DON</span><span style="position:absolute;left:30.75px;top:1px;letter-spacing:0.46px">31.01.08</span><span style="position:absolute;left:85px;top:1px;letter-spacing:0.25px">19:00</span><span style="position:absolute;left:121px;top:1px;letter-spacing:0.5px">UTC</span><span style="position:absolute;left:154.5px;top:1px;letter-spacing:-0.21px">Bodenwettermeldungen</span><span style="position:absolute;left:290px;top:1px;letter-spacing:0px">:</span><span style="position:absolute;left:301.75px;top:1px;letter-spacing:-0.22px">Bodendruck</span><span style="position:absolute;left:374px;top:1px;letter-spacing:0px">/</span><span style="position:absolute;left:384.25px;top:1px;letter-spacing:0px">hPa</span><span style="position:absolute;left:412px;top:1px;letter-spacing:0px">/</span><span style="position:absolute;left:420px;top:1px;letter-spacing:1px">10</span></div>
<div id="l">
<i style="left:91px;top:17px">20W</i>
<i style="left:328px;top:17px">10W</i>
<i style="left:575px;top:18px">0</i>
<i style="left:806px;top:17px">10E</i>
<i style="left:8px;top:236px">60N</i>
<i style="left:8px;top:457px">55N</i>
<i style="left:8px;top:652px">50N</i>
</div>
<div id="n">
<b class="c" style="left:46.5px;top:28px">195</b>
<b class="y" style="left:964.5px;top:3px">908</b>
<b class="y" style="left:1008.5px;top:5px">930</b>
<b class="y" style="left:975.5px;top:26px">913</b>
<b class="r" style="left:788.5px;top:26px">722</b>
<b class="p" style="left:928.5px;top:47px">874</b>
<b class="r" style="left:792.5px;top:51px">723</b>
<b class="y" style="left:1004.5px;top:54px">933</b>
<b class="r" style="left:753.5px;top:61px">690</b>
<b class="r" style="left:843.5px;top:66px">780</b>
<b class="p" style="left:908.5px;top:77px">847</b>
<b class="y" style="left:997.5px;top:81px">927</b>
<b class="r" style="left:710.5px;top:110px">668</b>
<b class="p" style="left:900.5px;top:114px">842</b>
<b class="p" style="left:951.5px;top:114px">899</b>
<b class="r" style="left:820.5px;top:126px">749</b>
<b class="r" style="left:785.5px;top:133px">724</b>
<b class="r" style="left:683.5px;top:137px">665</b>
<b class="y" style="left:957.5px;top:148px">907</b>
<b class="p" style="left:920.5px;top:156px">869</b>
<b class="r" style="left:596.5px;top:159px">648</b>
<b class="r" style="left:676.5px;top:161px">665</b>
<b class="r" style="left:754.5px;top:161px">698</b>
<b class="r" style="left:829.5px;top:169px">772</b>
<b class="p" style="left:897.5px;top:177px">850</b>
<b class="r" style="left:722.5px;top:181px">681</b>
<b class="r" style="left:605.5px;top:184px">644</b>
<b class="r" style="left:784.5px;top:189px">721</b>
<b class="r" style="left:545.5px;top:201px">630</b>
<b class="r" style="left:605.5px;top:208px">649</b>
<b class="r" style="left:653.5px;top:208px">667</b>
<b class="r" style="left:743.5px;top:208px">702</b>
<b class="r" style="left:781.5px;top:210px">718</b>
<b class="r" style="left:850.5px;top:207px">798</b>
<b class="y" style="left:966.5px;top:208px">937</b>
<b class="r" style="left:691.5px;top:219px">688</b>
<b class="p" style="left:892.5px;top:230px">853</b>
<b class="r" style="left:516.5px;top:231px">547</b>
<b class="r" style="left:685.5px;top:241px">688</b>
<b class="y" style="left:960.5px;top:241px">924</b>
<b class="y" style="left:1006.5px;top:245px">968</b>
<b class="r" style="left:739.5px;top:248px">706</b>
<b class="r" style="left:793.5px;top:255px">746</b>
<b class="p" style="left:864.5px;top:253px">824</b>
<b class="r" style="left:603.5px;top:260px">637</b>
<b class="y" style="left:961.5px;top:267px">927</b>
<b class="r" style="left:681.5px;top:270px">695</b>
<b class="r" style="left:821.5px;top:277px">773</b>
<b class="y" style="left:288.5px;top:279px">906</b>
<b class="r" style="left:461.5px;top:280px">567</b>
<b class="r" style="left:496.5px;top:286px">504</b>
<b class="r" style="left:699.5px;top:290px">712</b>
<b class="p" style="left:906.5px;top:289px">883</b>
<b class="r" style="left:783.5px;top:300px">756</b>
<b class="r" style="left:491.5px;top:309px">565</b>
<b class="p" style="left:866.5px;top:309px">844</b>
<b class="r" style="left:567.5px;top:315px">609</b>
<b class="r" style="left:415.5px;top:319px">683</b>
<b class="r" style="left:720.5px;top:324px">742</b>
<b class="r" style="left:756.5px;top:326px">759</b>
<b class="y" style="left:941.5px;top:334px">945</b>
<b class="r" style="left:471.5px;top:337px">634</b>
<b class="r" style="left:515.5px;top:342px">613</b>
<b class="r" style="left:598.5px;top:342px">658</b>
<b class="p" style="left:840.5px;top:345px">814</b>
<b class="r" style="left:390.5px;top:358px">744</b>
<b class="y" style="left:900.5px;top:360px">930</b>
<b class="r" style="left:498.5px;top:369px">647</b>
<b class="r" style="left:589.5px;top:369px">677</b>
<b class="p" style="left:798.5px;top:369px">822</b>
<b class="p" style="left:307.5px;top:377px">876</b>
<b class="r" style="left:454.5px;top:379px">679</b>
<b class="y" style="left:931.5px;top:380px">972</b>
<b class="p" style="left:760.5px;top:386px">800</b>
<b class="p" style="left:804.5px;top:392px">840</b>
<b class="r" style="left:615.5px;top:399px">731</b>
<b class="r" style="left:497.5px;top:401px">689</b>
<b class="y" style="left:927.5px;top:405px">989</b>
<b class="y" style="left:857.5px;top:411px">911</b>
<b class="p" style="left:758.5px;top:416px">840</b>
<b class="r" style="left:458.5px;top:420px">718</b>
<b class="p" style="left:822.5px;top:426px">876</b>
<b class="r" style="left:418.5px;top:429px">779</b>
<b class="r" style="left:509.5px;top:430px">740</b>
<b class="y" style="left:865.5px;top:432px">946</b>
<b class="p" style="left:765.5px;top:437px">860</b>
<b class="y" style="left:915.5px;top:445px">996</b>
<b class="p" style="left:799.5px;top:447px">895</b>
<b class="r" style="left:504.5px;top:456px">778</b>
<b class="p" style="left:764.5px;top:458px">884</b>
<b class="y" style="left:328.5px;top:458px">914</b>
<b class="p" style="left:412.5px;top:463px">846</b>
<b class="p" style="left:448.5px;top:464px">812</b>
<b class="p" style="left:677.5px;top:464px">840</b>
<b class="y" style="left:868.5px;top:466px">954</b>
<b class="p" style="left:544.5px;top:476px">823</b>
<b class="y" style="left:370.5px;top:478px">900</b>
<b class="p" style="left:501.5px;top:478px">837</b>
<b class="y" style="left:791.5px;top:477px">920</b>
<b class="y" style="left:827.5px;top:477px">947</b>
<b class="y" style="left:752.5px;top:486px">915</b>
<b class="p" style="left:411.5px;top:489px">888</b>
<b class="y" style="left:715.5px;top:492px">903</b>
<b class="g" style="left:882.5px;top:495px">010</b>
<b class="p" style="left:482.5px;top:499px">832</b>
<b class="y" style="left:791.5px;top:499px">954</b>
<b class="y" style="left:830.5px;top:499px">970</b>
<b class="y" style="left:356.5px;top:503px">942</b>
<b class="p" style="left:536.5px;top:505px">879</b>
<b class="y" style="left:600.5px;top:515px">910</b>
<b class="y" style="left:746.5px;top:517px">946</b>
<b class="g" style="left:865.5px;top:518px">026</b>
<b class="y" style="left:437.5px;top:519px">916</b>
<b class="y" style="left:492.5px;top:519px">907</b>
<b class="y" style="left:782.5px;top:519px">966</b>
<b class="y" style="left:692.5px;top:523px">926</b>
<b class="y" style="left:818.5px;top:523px">997</b>
<b class="y" style="left:552.5px;top:527px">918</b>
<b class="y" style="left:641.5px;top:530px">918</b>
<b class="g" style="left:188.5px;top:534px">076</b>
<b class="y" style="left:378.5px;top:535px">975</b>
<b class="y" style="left:592.5px;top:540px">934</b>
<b class="g" style="left:859.5px;top:541px">040</b>
<b class="y" style="left:502.5px;top:546px">939</b>
<b class="g" style="left:800.5px;top:546px">008</b>
<b class="y" style="left:453.5px;top:547px">956</b>
<b class="y" style="left:719.5px;top:549px">961</b>
<b class="y" style="left:549.5px;top:549px">935</b>
<b class="y" style="left:764.5px;top:555px">989</b>
<b class="g" style="left:910.5px;top:556px">097</b>
<b class="g" style="left:853.5px;top:562px">055</b>
<b class="y" style="left:678.5px;top:566px">968</b>
<b class="g" style="left:812.5px;top:566px">028</b>
<b class="y" style="left:415.5px;top:568px">992</b>
<b class="y" style="left:553.5px;top:569px">959</b>
<b class="y" style="left:517.5px;top:573px">963</b>
<b class="y" style="left:457.5px;top:573px">982</b>
<b class="y" style="left:589.5px;top:573px">961</b>
<b class="y" style="left:643.5px;top:577px">969</b>
<b class="g" style="left:322.5px;top:580px">040</b>
<b class="g" style="left:865.5px;top:582px">092</b>
<b class="g" style="left:369.5px;top:585px">023</b>
<b class="c" style="left:905.5px;top:586px">111</b>
<b class="g" style="left:406.5px;top:589px">012</b>
<b class="g" style="left:700.5px;top:591px">002</b>
<b class="g" style="left:829.5px;top:591px">066</b>
<b class="y" style="left:539.5px;top:592px">989</b>
<b class="g" style="left:444.5px;top:593px">008</b>
<b class="g" style="left:752.5px;top:593px">027</b>
<b class="y" style="left:585.5px;top:595px">980</b>
<b class="y" style="left:650.5px;top:598px">993</b>
<b class="y" style="left:488.5px;top:600px">993</b>
<b class="g" style="left:789.5px;top:604px">068</b>
<b class="g" style="left:316.5px;top:608px">058</b>
<b class="c" style="left:919.5px;top:609px">140</b>
<b class="g" style="left:250.5px;top:615px">080</b>
<b class="g" style="left:825.5px;top:616px">083</b>
<b class="g" style="left:652.5px;top:618px">011</b>
<b class="g" style="left:702.5px;top:618px">036</b>
<b class="g" style="left:572.5px;top:619px">002</b>
<b class="g" style="left:488.5px;top:620px">020</b>
<b class="g" style="left:536.5px;top:623px">011</b>
<b class="c" style="left:871.5px;top:623px">123</b>
<b class="g" style="left:754.5px;top:628px">084</b>
<b class="c" style="left:830.5px;top:638px">136</b>
<b class="g" style="left:467.5px;top:640px">033</b>
<b class="g" style="left:675.5px;top:644px">063</b>
<b class="g" style="left:608.5px;top:648px">037</b>
<b class="g" style="left:420.5px;top:649px">055</b>
<b class="c" style="left:737.5px;top:654px">118</b>
<b class="c" style="left:930.5px;top:655px">182</b>
<b class="g" style="left:520.5px;top:660px">024</b>
<b class="c" style="left:882.5px;top:661px">166</b>
<b class="c" style="left:780.5px;top:663px">132</b>
<b class="c" style="left:966.5px;top:665px">198</b>
<b class="g" style="left:566.5px;top:671px">052</b>
<b class="c" style="left:827.5px;top:671px">159</b>
<b class="g" style="left:615.5px;top:672px">068</b>
<b class="c" style="left:661.5px;top:678px">101</b>
<b class="c" style="left:724.5px;top:679px">141</b>
<b class="g" style="left:513.5px;top:681px">064</b>
<b class="c" style="left:904.5px;top:682px">187</b>
<b class="c" style="left:947.5px;top:685px">199</b>
<b class="c" style="left:764.5px;top:688px">165</b>
<b class="c" style="left:837.5px;top:691px">187</b>
<b class="g" style="left:612.5px;top:697px">099</b>
<b class="c" style="left:269.5px;top:700px">108</b>
<b class="g" style="left:462.5px;top:700px">084</b>
<b class="c" style="left:800.5px;top:701px">179</b>
<b class="c" style="left:682.5px;top:702px">145</b>
<b class="t" style="left:881.5px;top:705px">200</b>
<b class="g" style="left:497.5px;top:706px">079</b>
<b class="g" style="left:567.5px;top:709px">096</b>
<b class="c" style="left:845.5px;top:712px">187</b>
<b class="c" style="left:718.5px;top:718px">182</b>
<b class="t" style="left:953.5px;top:718px">206</b>
<b class="c" style="left:918.5px;top:721px">195</b>
<b class="g" style="left:453.5px;top:724px">096</b>
<b class="c" style="left:608.5px;top:725px">134</b>
<b class="c" style="left:650.5px;top:732px">162</b>
<b class="t" style="left:873.5px;top:732px">204</b>
<b class="c" style="left:810.5px;top:735px">196</b>
<b class="c" style="left:769.5px;top:736px">194</b>
<b class="t" style="left:999.5px;top:737px">236</b>
<b class="c" style="left:501.5px;top:739px">112</b>
<b class="c" style="left:364.5px;top:742px">120</b>
<b class="c" style="left:552.5px;top:743px">133</b>
<b class="t" style="left:729.5px;top:745px">203</b>
<b class="c" style="left:605.5px;top:749px">165</b>
<b class="t" style="left:685.5px;top:751px">201</b>
<b class="t" style="left:952.5px;top:753px">215</b>
<b class="t" style="left:815.5px;top:755px">205</b>
<b class="c" style="left:901.5px;top:756px">198</b>
<b class="t" style="left:987.5px;top:758px">241</b>
<b class="t" style="left:780.5px;top:759px">205</b>
</div>
</div></body></html>
